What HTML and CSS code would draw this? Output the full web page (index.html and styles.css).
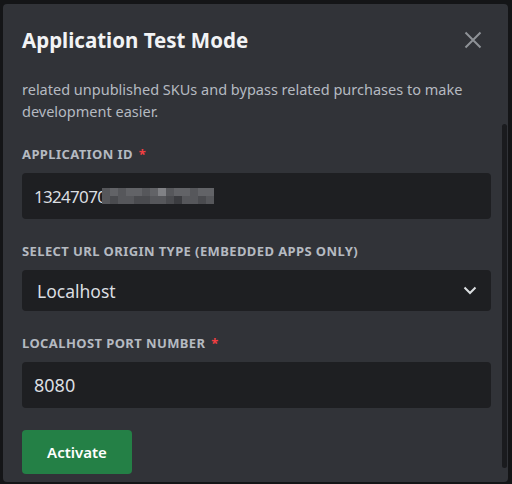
FILE: index.html
```html
<!DOCTYPE html>
<html lang="en">

<head>
     <meta charset="UTF-8">
     <meta name="viewport" content="width=device-width, initial-scale=1.0">
     <title>Application Test Mode</title>
     <link rel="stylesheet" href="styles.css">
</head>

<body>
     <div class="modal">
          <header class="modal-header">
               <h1>Application Test Mode</h1>
               <button class="close-btn" aria-label="Close">
                    <svg width="18" height="18" viewBox="0 0 18 18">
                         <path d="M1.5 1.5 L16.5 16.5 M16.5 1.5 L1.5 16.5" stroke="currentColor" stroke-width="2" fill="none" />
                    </svg>
               </button>
          </header>

          <div class="modal-body">
               <div class="form">
                    <p class="desc">related unpublished SKUs and bypass related purchases to make development easier.</p>

                    <div class="field">
                         <label>Application ID <span class="req">*</span></label>
                         <div class="input app-id">
                              <span>13247070</span>
                              <!-- redacted part of the id -->
                              <span class="mosaic">
                                   <i class="m2"></i><i class="m3"></i><i class="m2"></i><i class="m3"></i><i class="m3"></i><i class="m2"></i><i class="m3"></i><i class="m4"></i><i class="m2"></i><i class="m3"></i><i class="m3"></i><i class="m2"></i><i class="m3"></i><i class="m3"></i>
                                   <i class="m2"></i><i class="m1"></i><i class="m2"></i><i class="m2"></i><i class="m1"></i><i class="m1"></i><i class="m2"></i><i class="m2"></i><i class="m1"></i><i class="m0"></i><i class="m2"></i><i class="m2"></i><i class="m1"></i><i class="m2"></i>
                              </span>
                         </div>
                    </div>

                    <div class="field">
                         <label>Select URL Origin Type (Embedded Apps Only)</label>
                         <div class="input select">
                              <span>Localhost</span>
                              <svg width="14" height="9" viewBox="0 0 14 9">
                                   <path d="M1.5 1.5 L7 7 L12.5 1.5" stroke="currentColor" stroke-width="2" fill="none" />
                              </svg>
                         </div>
                    </div>

                    <div class="field">
                         <label>Localhost Port Number <span class="req">*</span></label>
                         <div class="input">8080</div>
                    </div>

                    <button class="btn-activate">Activate</button>
               </div>

               <div class="scrollbar"></div>
          </div>
     </div>
</body>

</html>
```

FILE: styles.css
```css
/* Base styles */
body {
     margin: 0;
     background-color: #141517;
     font-family: "Noto Sans", sans-serif;
     color: #dbdee1;
}

/* Modal shell */
.modal {
     margin: 4px 4px 0 3px;
     height: 478px;
     background: #313338;
     border-radius: 4px;
     overflow: hidden;
     display: flex;
     flex-direction: column;
}

.modal-header {
     display: flex;
     align-items: center;
     justify-content: space-between;
     padding: 24px 26px 0 19px;
}

.modal-header h1 {
     margin: 0;
     font-size: 20.5px;
     line-height: 25px;
     font-weight: 700;
     color: #f2f3f5;
}

.close-btn {
     background: none;
     border: 0;
     padding: 0;
     margin-top: -1px;
     color: #8e9297;
     display: flex;
}

/* Scrolling body */
.modal-body {
     display: flex;
     flex: 1;
     min-height: 0;
     padding-left: 19px;
}

.form {
     flex: 1;
     padding-top: 25px;
}

.scrollbar {
     width: 5px;
     margin: 71px 1px 14px 11px;
     background: #1a1b1e;
     border-radius: 3px;
}

.desc {
     margin: 0 0 24px;
     font-size: 14.5px;
     line-height: 22px;
     color: #b5bac1;
}

.field {
     margin-bottom: 24px;
}

.field label {
     display: block;
     margin-bottom: 11px;
     font-size: 13px;
     line-height: 16px;
     font-weight: 700;
     letter-spacing: 0.4px;
     text-transform: uppercase;
     color: #b5bac1;
}

.req {
     color: #f23f42;
     margin-left: 2px;
}

.input {
     height: 46px;
     display: flex;
     align-items: center;
     padding: 0 12px;
     background: #1e1f22;
     border-radius: 4px;
     font-size: 18px;
     color: #dbdee1;
}

.app-id span:first-child {
     font-size: 17px;
     letter-spacing: -0.7px;
}

/* pixelated redaction */
.mosaic {
     display: grid;
     grid-template-columns: repeat(14, 8px);
     grid-auto-rows: 8px;
     margin-left: -4px;
}

.mosaic i {
     display: block;
}

.m0 { background: #3b3c40; }
.m1 { background: #4a4b4f; }
.m2 { background: #56575b; }
.m3 { background: #626367; }
.m4 { background: #808185; }

.select {
     height: 41px;
     padding: 0 14px 0 15px;
     justify-content: space-between;
     font-size: 17.5px;
}

.btn-activate {
     width: 110px;
     height: 44px;
     margin-top: -2px;
     border: 0;
     border-radius: 4px;
     background: #248046;
     color: #ffffff;
     font-family: "Noto Sans", sans-serif;
     font-size: 15px;
     font-weight: 600;
}
```
